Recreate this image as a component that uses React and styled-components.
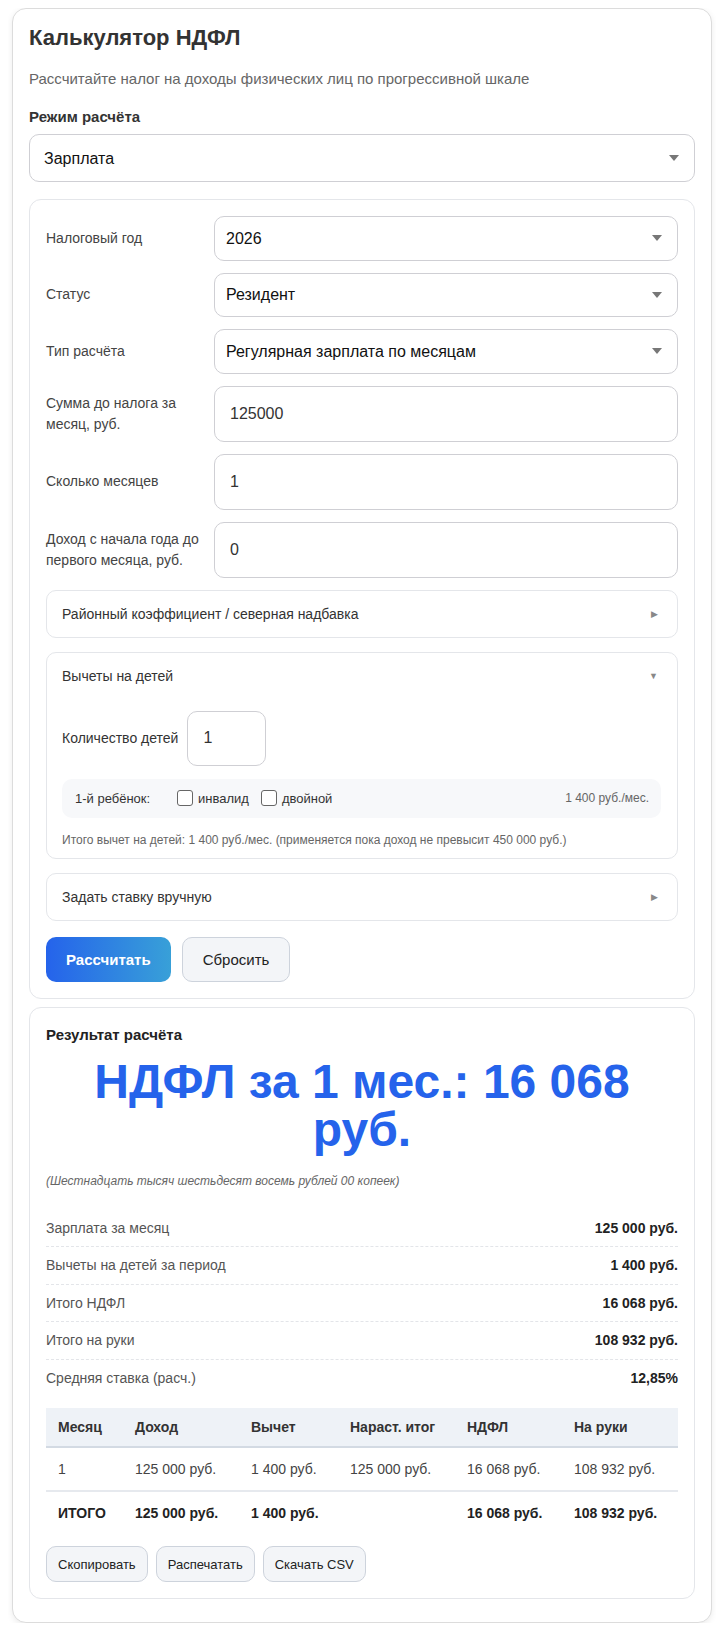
import styled, { createGlobalStyle } from 'styled-components';

const GlobalStyle = createGlobalStyle`
  body {
    margin: 8px;
    background: #fff;
    font-family: "Liberation Sans", Arial, sans-serif;
    color: #222;
  }
  * { box-sizing: border-box; }
`;

// data
const months = [
  { m: '1', income: '125 000 руб.', ded: '1 400 руб.', cum: '125 000 руб.', tax: '16 068 руб.', net: '108 932 руб.' },
];
const summary = [
  ['Зарплата за месяц', '125 000 руб.'],
  ['Вычеты на детей за период', '1 400 руб.'],
  ['Итого НДФЛ', '16 068 руб.'],
  ['Итого на руки', '108 932 руб.'],
  ['Средняя ставка (расч.)', '12,85%'],
];
const colWidths = [77, 116, 99, 117, 107, 116];

const Card = styled.div`
  max-width: 700px;
  margin: 0 auto;
  background: #fff;
  border: 1px solid #dcdcdc;
  border-radius: 14px;
  box-shadow: 0 2px 6px rgba(0, 0, 0, 0.08);
  padding: 16px 16px 15px;
`;

const Title = styled.h1`
  margin: 0 0 18px;
  font-size: 22px;
  line-height: 26px;
  font-weight: 700;
  color: #333;
`;

const Subtitle = styled.p`
  margin: 0 0 18px;
  font-size: 15px;
  line-height: 20px;
  color: #666;
`;

const FieldTitle = styled.div`
  font-size: 15px;
  line-height: 20px;
  font-weight: 700;
  color: #333;
  margin-bottom: 7px;
`;

const SelectWrap = styled.div`
  position: relative;
`;

const Select = styled.select`
  appearance: none;
  width: 100%;
  height: ${(p) => p.$h}px;
  padding: 0 30px 0 ${(p) => p.$pad}px;
  border: 1px solid #cfcfd4;
  border-radius: 10px;
  background: #fff;
  font-family: inherit;
  font-size: 16px;
  color: #111;
`;

const Arrow = styled.svg`
  position: absolute;
  right: 16px;
  top: 50%;
  margin-top: -3px;
  pointer-events: none;
`;

const Panel = styled.div`
  border: 1px solid #e4e6ea;
  border-radius: 12px;
  padding: 16px;
  margin-top: ${(p) => p.$mt}px;
  margin-bottom: ${(p) => p.$mb || 0}px;
`;

const Form = styled.div`
  display: flex;
  flex-direction: column;
  gap: 12px;
`;

const Row = styled.div`
  display: grid;
  grid-template-columns: 160px 1fr;
  column-gap: 8px;
  align-items: center;
`;

const Label = styled.label`
  font-size: 14px;
  line-height: 21px;
  color: #444;
`;

const Input = styled.input`
  width: ${(p) => p.$w || '100%'};
  height: ${(p) => p.$h || 56}px;
  padding: 0 15px;
  border: 1px solid #cfcfd4;
  border-radius: 10px;
  font-family: inherit;
  font-size: 16px;
  color: #333;
  background: #fff;
`;

const Box = styled.div`
  border: 1px solid #e4e6ea;
  border-radius: 10px;
  background: #fff;
  & + & {
    margin-top: 2px;
  }
`;

const BoxHead = styled.div`
  display: flex;
  align-items: center;
  justify-content: space-between;
  padding: 14px 16px 14px 15px;
  font-size: 14px;
  line-height: 18px;
  color: #333;
`;

const Caret = styled.span`
  font-size: 9px;
  color: #888;
  margin-right: 3px;
`;

const BoxBody = styled.div`
  padding: 0 16px 10px 15px;
`;

const KidsRow = styled.div`
  display: flex;
  align-items: center;
  gap: 9px;
  margin-top: 12px;
  font-size: 14px;
  color: #333;
`;

const ChildLine = styled.div`
  display: flex;
  align-items: center;
  margin-top: 13px;
  height: 39px;
  padding: 0 12px 0 13px;
  background: #f7f8fa;
  border-radius: 10px;
  font-size: 13px;
  color: #333;
`;

const ChildName = styled.span`
  width: 102px;
`;

const Check = styled.label`
  display: flex;
  align-items: center;
  gap: 5px;
  margin-right: 12px;
`;

const CheckBox = styled.input`
  appearance: none;
  margin: 0;
  width: 16px;
  height: 16px;
  border: 1px solid #666;
  border-radius: 3px;
  background: #fff;
`;

const ChildSum = styled.span`
  margin-left: auto;
  color: #666;
  font-size: 12px;
`;

const Note = styled.div`
  margin-top: 14px;
  font-size: 12px;
  line-height: 16px;
  color: #666;
`;

const Buttons = styled.div`
  display: flex;
  gap: ${(p) => p.$gap}px;
  margin-top: ${(p) => p.$mt}px;
`;

const PrimaryButton = styled.button`
  height: 45px;
  padding: 0 20px;
  border: none;
  border-radius: 10px;
  background: linear-gradient(90deg, #2563eb, #38a0d8);
  color: #fff;
  font-family: inherit;
  font-size: 15px;
  font-weight: 700;
`;

const GhostButton = styled.button`
  height: ${(p) => p.$h}px;
  padding: 0 ${(p) => p.$px}px;
  border: 1px solid #cdd3dc;
  border-radius: 10px;
  background: #f3f5f8;
  color: #222;
  font-family: inherit;
  font-size: ${(p) => p.$fs}px;
`;

const ResultTitle = styled.div`
  font-size: 15px;
  line-height: 22px;
  font-weight: 700;
  color: #222;
`;

const Big = styled.div`
  margin-top: 12px;
  text-align: center;
  font-size: 48px;
  line-height: 48px;
  font-weight: 700;
  color: #2563eb;
`;

const Words = styled.div`
  margin: 19px 0 21px;
  font-size: 12px;
  line-height: 16px;
  font-style: italic;
  color: #666;
`;

const SumRow = styled.div`
  display: flex;
  justify-content: space-between;
  padding: 9.25px 0;
  font-size: 14px;
  line-height: 18px;
  color: #555;
  border-bottom: ${(p) => (p.$last ? 'none' : '1px dashed #e3e5e9')};
  b {
    color: #222;
  }
`;

const Table = styled.table`
  width: 100%;
  margin-top: 12px;
  border-collapse: collapse;
  table-layout: fixed;
  font-size: 14px;
  line-height: 18px;
  color: #333;
`;

const Col = styled.col`
  width: ${(p) => p.$w}px;
`;

const Th = styled.th`
  text-align: left;
  padding: 10px 12px;
  background: #eef2f7;
  border-bottom: 2px solid #d3dae3;
  font-weight: 700;
  color: #333;
`;

const Td = styled.td`
  padding: 12px;
  border-bottom: ${(p) => (p.$last ? 'none' : '2px solid #e6e9ee')};
  font-weight: ${(p) => (p.$bold ? 700 : 400)};
  color: ${(p) => (p.$bold ? '#222' : '#444')};
`;

const SelectField = ({ value, h, pad }) => (
  <SelectWrap>
    <Select $h={h} $pad={pad} defaultValue={value}>
      <option>{value}</option>
    </Select>
    <Arrow width="10" height="6" viewBox="0 0 10 6">
      <path d="M0 0h10L5 6z" fill="#777" />
    </Arrow>
  </SelectWrap>
);

const App = () => {
  return (
    <>
      <GlobalStyle />
      <Card>
        <Title>Калькулятор НДФЛ</Title>
        <Subtitle>Рассчитайте налог на доходы физических лиц по прогрессивной шкале</Subtitle>
        <FieldTitle>Режим расчёта</FieldTitle>
        <SelectField value="Зарплата" h={48} pad={14} />

        <Panel $mt={17}>
          <Form>
            <Row>
              <Label>Налоговый год</Label>
              <SelectField value="2026" h={44.5} pad={11} />
            </Row>
            <Row>
              <Label>Статус</Label>
              <SelectField value="Резидент" h={44.5} pad={11} />
            </Row>
            <Row>
              <Label>Тип расчёта</Label>
              <SelectField value="Регулярная зарплата по месяцам" h={44.5} pad={11} />
            </Row>
            <Row>
              <Label>Сумма до налога за месяц, руб.</Label>
              <Input defaultValue="125000" />
            </Row>
            <Row>
              <Label>Сколько месяцев</Label>
              <Input defaultValue="1" />
            </Row>
            <Row>
              <Label>Доход с начала года до первого месяца, руб.</Label>
              <Input defaultValue="0" />
            </Row>

            <Box>
              <BoxHead>
                Районный коэффициент / северная надбавка
                <Caret>▶</Caret>
              </BoxHead>
            </Box>

            <Box>
              <BoxHead>
                Вычеты на детей
                <Caret>▼</Caret>
              </BoxHead>
              <BoxBody>
                <KidsRow>
                  Количество детей
                  <Input $w="79px" $h={55} defaultValue="1" />
                </KidsRow>
                <ChildLine>
                  <ChildName>1-й ребёнок:</ChildName>
                  <Check>
                    <CheckBox type="checkbox" />
                    инвалид
                  </Check>
                  <Check>
                    <CheckBox type="checkbox" />
                    двойной
                  </Check>
                  <ChildSum>1 400 руб./мес.</ChildSum>
                </ChildLine>
                <Note>
                  Итого вычет на детей: 1 400 руб./мес. (применяется пока доход не превысит 450 000 руб.)
                </Note>
              </BoxBody>
            </Box>

            <Box>
              <BoxHead>
                Задать ставку вручную
                <Caret>▶</Caret>
              </BoxHead>
            </Box>
          </Form>

          <Buttons $gap={11} $mt={16}>
            <PrimaryButton>Рассчитать</PrimaryButton>
            <GhostButton $h={45} $px={20} $fs={15}>Сбросить</GhostButton>
          </Buttons>
        </Panel>

        <Panel $mt={8} $mb={8}>
          <ResultTitle>Результат расчёта</ResultTitle>
          <Big>НДФЛ за 1 мес.: 16 068 руб.</Big>
          <Words>(Шестнадцать тысяч шестьдесят восемь рублей 00 копеек)</Words>

          {summary.map(([k, v], i) => (
            <SumRow key={k} $last={i === summary.length - 1}>
              <span>{k}</span>
              <b>{v}</b>
            </SumRow>
          ))}

          <Table>
            <colgroup>
              {colWidths.map((w, i) => (
                <Col key={i} $w={w} />
              ))}
            </colgroup>
            <thead>
              <tr>
                <Th>Месяц</Th>
                <Th>Доход</Th>
                <Th>Вычет</Th>
                <Th>Нараст. итог</Th>
                <Th>НДФЛ</Th>
                <Th>На руки</Th>
              </tr>
            </thead>
            <tbody>
              {months.map((r) => (
                <tr key={r.m}>
                  <Td>{r.m}</Td>
                  <Td>{r.income}</Td>
                  <Td>{r.ded}</Td>
                  <Td>{r.cum}</Td>
                  <Td>{r.tax}</Td>
                  <Td>{r.net}</Td>
                </tr>
              ))}
              <tr>
                <Td $bold $last>ИТОГО</Td>
                <Td $bold $last>125 000 руб.</Td>
                <Td $bold $last>1 400 руб.</Td>
                <Td $bold $last></Td>
                <Td $bold $last>16 068 руб.</Td>
                <Td $bold $last>108 932 руб.</Td>
              </tr>
            </tbody>
          </Table>

          <Buttons $gap={8} $mt={12}>
            <GhostButton $h={36} $px={11} $fs={13}>Скопировать</GhostButton>
            <GhostButton $h={36} $px={11} $fs={13}>Распечатать</GhostButton>
            <GhostButton $h={36} $px={11} $fs={13}>Скачать CSV</GhostButton>
          </Buttons>
        </Panel>
      </Card>
    </>
  );
};

export default App;
